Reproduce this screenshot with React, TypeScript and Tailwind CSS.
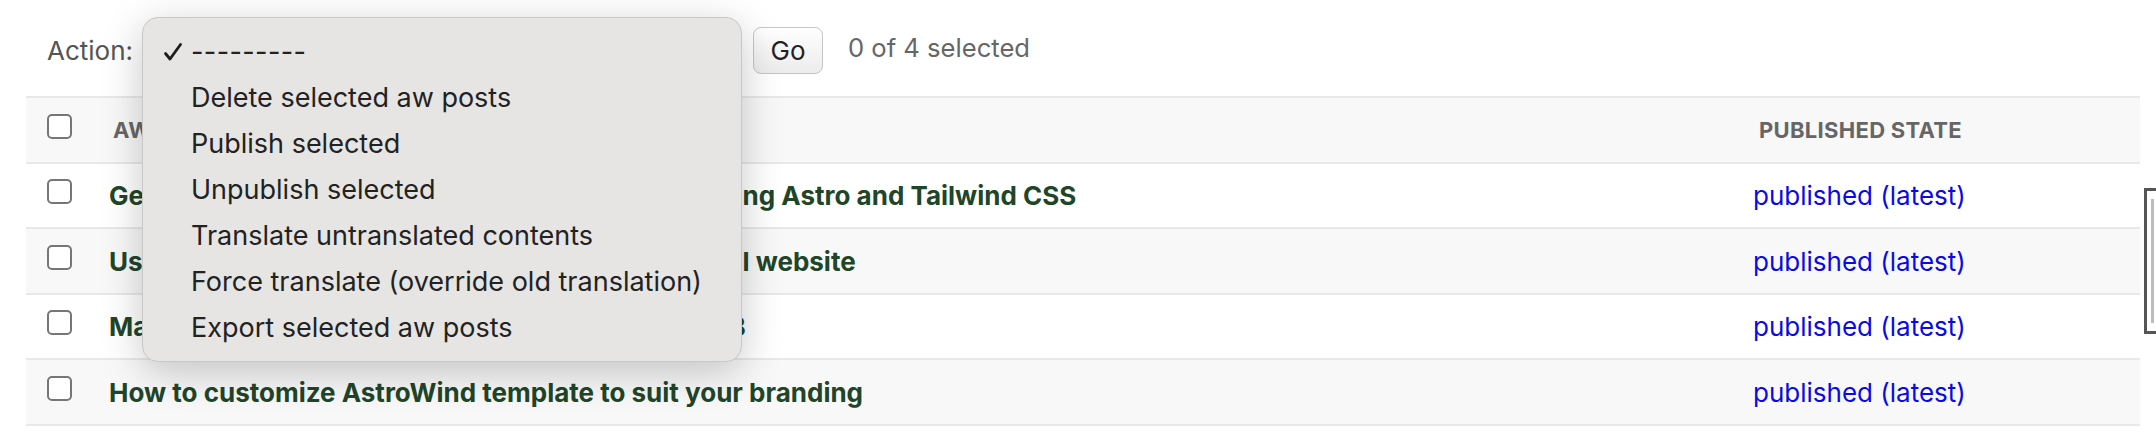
import React from "react";

const actions = [
  "Delete selected aw posts",
  "Publish selected",
  "Unpublish selected",
  "Translate untranslated contents",
  "Force translate (override old translation)",
  "Export selected aw posts",
];

const posts = [
  "Get started with AstroWind to create a website using Astro and Tailwind CSS",
  "Useful tips and resources to publish a professional website",
  "Manage your website content easily with Astro DB",
  "How to customize AstroWind template to suit your branding",
];

const Checkbox = ({ className }: { className?: string }) => (
  <span
    className={
      "block size-[25px] rounded-[5px] border-2 border-[#767676] bg-white " +
      (className ?? "")
    }
  />
);

const ActionMenu = () => (
  <div className="absolute left-[142px] top-[17px] w-[600px] rounded-[16px] border border-[#c9c8c6] bg-[#e6e5e3] pb-[10px] pt-[11px] shadow-[0_10px_40px_rgba(0,0,0,0.22)]">
    <div className="flex h-[46px] items-center text-[27px] text-[#222]">
      <svg
        viewBox="0 0 20 20"
        className="ml-[20px] mr-[8px] size-[20px]"
        fill="none"
        stroke="#1d1d1d"
        strokeWidth="2.8"
        strokeLinecap="round"
        strokeLinejoin="round"
        aria-hidden="true"
      >
        <path d="M2.5 11.5 L7 17 L17.5 2.5" />
      </svg>
      <span className="tracking-[0.4px]">---------</span>
    </div>
    {actions.map((a) => (
      <div
        key={a}
        className="flex h-[46px] items-center pl-[48px] text-[27px] text-[#222]"
      >
        {a}
      </div>
    ))}
  </div>
);

export default function App() {
  return (
    <div className="relative h-[434px] w-full overflow-hidden bg-white font-[Inter,'Noto_Sans',sans-serif]">
      <div className="flex pl-[26px]">
        <div className="w-[2114px] shrink-0">
          {/* toolbar */}
          <div className="flex h-[96px] items-center pl-[21px] pt-[4px]">
            <label className="w-[83px] text-[26px] text-[#555]">Action:</label>
            <div className="ml-[12px] h-[47px] w-[600px]" />
            <button className="ml-[11px] h-[47px] w-[70px] rounded-[8px] border border-[#c6c6c6] bg-gradient-to-b from-white to-[#ececec] text-[26px] text-[#222]">
              Go
            </button>
            <span className="ml-[25px] -mt-[4px] text-[25.6px] text-[#666]">
              0 of 4 selected
            </span>
          </div>

          {/* table */}
          <div className="border-t-2 border-[#e8e8e8]">
            <div className="flex h-[66px] items-center border-b-2 border-[#e8e8e8] bg-[#f8f8f8]">
              <div className="flex w-[83px] pl-[21px]">
                <Checkbox className="mb-[7px]" />
              </div>
              <div className="flex-1 pl-[4px] text-[22px] font-bold tracking-[0.3px] text-[#666]">
                AW POST
              </div>
              <div className="w-[387px] pl-[6px] text-[22px] font-bold tracking-[0.3px] text-[#666]">
                PUBLISHED STATE
              </div>
            </div>
            {posts.map((p, i) => (
              <div
                key={p}
                className={
                  i % 2 === 0
                    ? "flex h-[65px] items-center border-b-2 border-[#e8e8e8] bg-white"
                    : "flex h-[66px] items-center border-b-2 border-[#e8e8e8] bg-[#f8f8f8]"
                }
              >
                <div className="flex w-[83px] pl-[21px]">
                  <Checkbox className="mb-[8px]" />
                </div>
                <div className="flex-1 text-[26px] font-bold text-[#214529]">
                  {p}
                </div>
                <div className="w-[387px] text-[26px] text-[#0a0ae6]">
                  published (latest)
                </div>
              </div>
            ))}
          </div>
        </div>

        {/* clipped side panel */}
        <div className="ml-[4px] mt-[188px] flex h-[146px] flex-1 border-y-[3px] border-l-[3px] border-[#555]">
          <div className="my-[8px] ml-[4px] w-[3px] bg-[#bdbdbd]" />
        </div>
      </div>

      <ActionMenu />
    </div>
  );
}
